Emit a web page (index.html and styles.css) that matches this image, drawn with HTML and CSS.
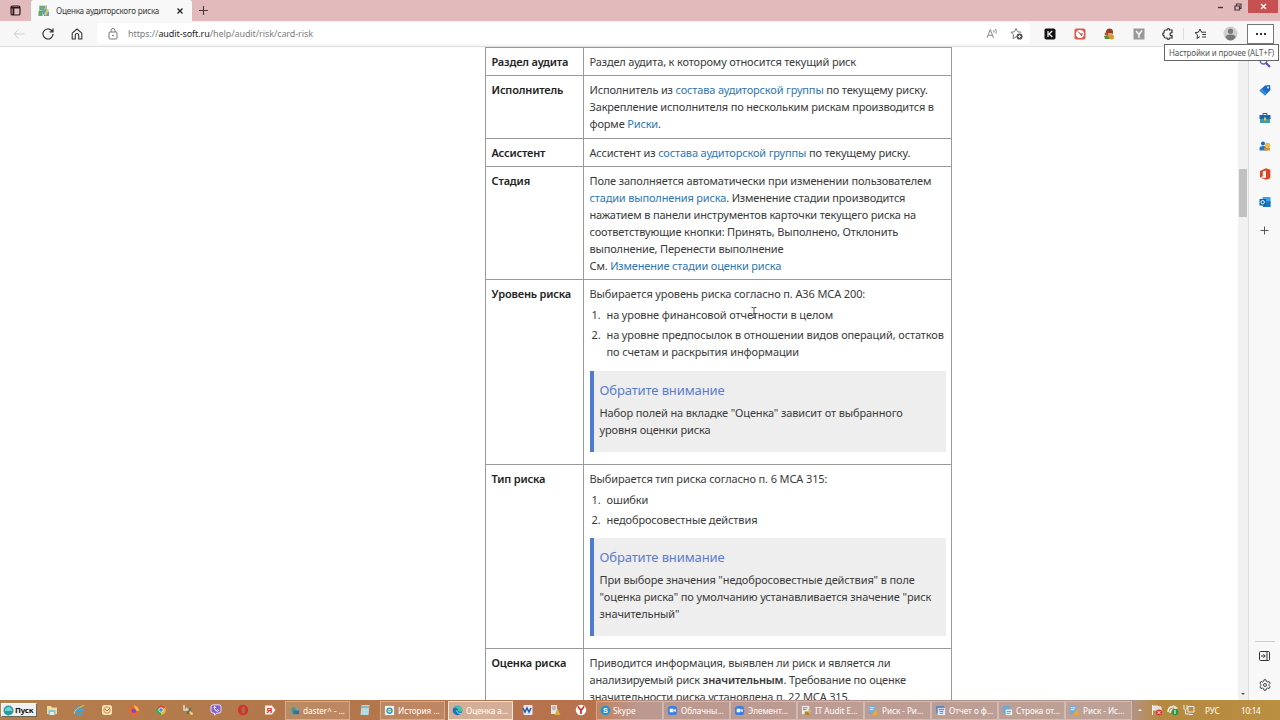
FILE: index.html
```
<!DOCTYPE html>
<html lang="ru">
<head>
    <meta charset="UTF-8">
    <title>Оценка аудиторского риска</title>
    <link rel="stylesheet" href="styles.css">
</head>
<body>
    <!-- Tabs -->
    <div class="tabbar">
        <div class="tab-menu">
            <svg width="11" height="11" viewBox="0 0 11 11"><rect x="1" y="1" width="9" height="9" rx="1.6" fill="none" stroke="#2b1a1c" stroke-width="1.2"/><path d="M1 2.6h9M3.4 3v7" stroke="#2b1a1c" stroke-width="1.8"/></svg>
        </div>
        <div class="tab">
            <svg width="12" height="12" viewBox="0 0 12 12"><rect x="1" y="0.5" width="8" height="8" fill="#9fc3a3"/><path d="M2 2h5M2 4h4" stroke="#3f8f55"/><rect x="0.5" y="6" width="4" height="5" fill="#58a869"/><path d="M4 6l4-2 3 3v4H6z" fill="#5a9bd0"/><path d="M6 9l3-5 2 1-3 6z" fill="#e0c45c"/></svg>
            <span class="tab-title">Оценка аудиторского риска</span>
            <svg class="tab-close" width="8" height="8" viewBox="0 0 8 8"><path d="M1.5 1.5l5 5M6.500 1.500l-5 5" stroke="#222" stroke-width="1.3"/></svg>
        </div>
        <svg class="new-tab" width="11" height="11" viewBox="0 0 11 11"><path d="M5.500 1v9M1 5.500h9" stroke="#4a3538" stroke-width="1.1"/></svg>
        <div class="window-buttons">
            <svg width="7" height="7" viewBox="0 0 7 7"><path d="M1 4.500h5" stroke="#4b3437" stroke-width="1.4"/></svg>
            <svg width="8" height="8" viewBox="0 0 8 8"><path d="M2.500 2.500V1h4.500v4.500H5.500M1 3h4.500v4H1z" fill="none" stroke="#4b3437" stroke-width="1.2"/></svg>
            <div class="window-close"><svg width="7" height="7" viewBox="0 0 7 7"><path d="M1 1l5 5M6 1L1 6" stroke="#fff" stroke-width="1.400"/></svg></div>
        </div>
    </div>

    <!-- Toolbar -->
    <div class="toolbar">
        <div class="nav">
            <svg width="12" height="12" viewBox="0 0 12 12" fill="none" stroke="#cfcfcf"><path d="M11.500 6H1M5.500 1.500L1 6l4.500 4.500"/></svg>
            <svg width="12" height="12" viewBox="0 0 12 12" fill="none" stroke="#333" stroke-width="1.2"><path d="M11 6a5 5 0 1 1-1.600-3.700L11 3.800M11 .5v3.300H7.700"/></svg>
            <svg width="12" height="12" viewBox="0 0 12 12" fill="none" stroke="#333" stroke-width="1.100"><path d="M1.200 5.200L6 1l4.800 4.200V11H7.700V7.200a1.700 1.700 0 0 0-3.400 0V11H1.200z" stroke-linejoin="round"/></svg>
        </div>
        <div class="address">
            <svg width="10" height="12" viewBox="0 0 10 12" fill="none" stroke="#777"><rect x="1" y="4" width="8" height="7" rx="1"/><path d="M3 4V2.500a2 2 0 0 1 4 0V4"/><circle cx="5" cy="7.500" r=".5" fill="#777"/></svg>
            <span class="url">https://<b>audit-soft.ru</b>/help/audit/risk/card-risk</span>
            <svg class="read" width="12" height="12" viewBox="0 0 12 12" fill="none" stroke="#888"><path d="M1 10l3.300-8.500L7.500 10M2.300 7.300h4M7.500 2q1 1 .5 2.500M9.300 1q1.600 2 .7 4.500"/></svg>
            <svg width="13" height="13" viewBox="0 0 13 13" fill="none" stroke="#777"><path d="M6 10L3 11.500l.5-3.700L1 5.300l3.500-.6L6 1.500l1.600 3.200 3.700.6"/><circle cx="9.500" cy="9.500" r="3.100" fill="#555" stroke="none"/><path d="M9.500 8v3M8 9.500h3" stroke="#fff" stroke-width=".8"/></svg>
        </div>
        <div class="extensions">
            <svg width="12" height="12" viewBox="0 0 12 12"><rect x=".5" y=".5" width="11" height="11" rx="1.800" fill="#111"/><path d="M4 3v6M8.200 3L5 6l3.400 3" stroke="#fff" stroke-width="1.200" fill="none"/></svg>
            <svg width="12" height="12" viewBox="0 0 12 12"><rect x=".5" y=".5" width="11" height="11" rx="2" fill="#e2574c"/><circle cx="6" cy="6" r="4" fill="#fff"/><path d="M4 3.500L6.500 6H9M6.500 6L8 8" stroke="#a33" fill="none"/></svg>
            <svg width="12" height="12" viewBox="0 0 12 12"><circle cx="6.500" cy="4" r="3.500" fill="#9c3b24"/><path d="M5 5h4v3H5z" fill="#e0a35e"/><path d="M1 8l4-1 2 4H2z" fill="#5b8a3c"/><circle cx="8.500" cy="9" r="2.500" fill="#d99a2b"/><circle cx="3" cy="6" r="1.400" fill="#b55a33"/></svg>
            <svg width="12" height="12" viewBox="0 0 12 12"><rect x=".5" y=".5" width="11" height="11" fill="#999"/><path d="M3 3l3 3.500V10M9 2.500L6 6.500" stroke="#fff" stroke-width="1.300" fill="none"/></svg>
            <svg width="12" height="12" viewBox="0 0 12 12" fill="none" stroke="#333" stroke-width="1.200"><path d="M2 3.500Q2 2 3.500 2H5q0-1.300 1.300-1.300T7.500 2H10v2.700Q8 4.500 8 6.200T10 7.700V10H7.500q0 1.300-1.200 1.300T5 10H3.500Q2 10 2 8.500V7.700Q.7 7.500.7 6.200T2 4.800z"/></svg>
        </div>
        <div class="toolbar-end">
            <svg width="13" height="12" viewBox="0 0 13 12" fill="none" stroke="#333"><path d="M6 8.500L3 10.500l.6-3.500L1 4.700l3.400-.5L6 1l1.500 3.200H12M8.300 6.500H12M8 9h4"/></svg>
            <svg width="15" height="15" viewBox="0 0 15 15"><circle cx="7.500" cy="7.500" r="7" fill="#cfcfcf"/><circle cx="7.500" cy="5.200" r="2.600" fill="#777"/><path d="M2.500 11.500q0-3 5-3t5 3q-2 3-5 3t-5-3z" fill="#777"/></svg>
            <div class="more"><i></i><i></i><i></i></div>
        </div>
        <div class="tooltip">Настройки и прочее (ALT+F)</div>
    </div>

    <!-- Page and sidebar -->
    <div class="main">
        <div class="page">
            <table class="fields">
                <tr class="row-section">
                    <th>Раздел аудита</th>
                    <td>Раздел аудита, к которому относится текущий риск</td>
                </tr>
                <tr class="row-executor">
                    <th>Исполнитель</th>
                    <td>Исполнитель из <a>состава аудиторской группы</a> по текущему риску.<br>Закрепление исполнителя по нескольким рискам производится в<br>форме <a>Риски</a>.</td>
                </tr>
                <tr class="row-section">
                    <th>Ассистент</th>
                    <td>Ассистент из <a>состава аудиторской группы</a> по текущему риску.</td>
                </tr>
                <tr class="row-stage">
                    <th>Стадия</th>
                    <td>Поле заполняется автоматически при изменении пользователем<br><a>стадии выполнения риска</a>. Изменение стадии производится<br>нажатием в панели инструментов карточки текущего риска на<br>соответствующие кнопки: Принять, Выполнено, Отклонить<br>выполнение, Перенести выполнение<br>См. <a>Изменение стадии оценки риска</a></td>
                </tr>
                <tr class="row-level">
                    <th>Уровень риска</th>
                    <td>
                        Выбирается уровень риска согласно п. А36 МСА 200:
                        <ol>
                            <li><span>1.</span><p>на уровне финансовой отчетности в целом</p></li>
                            <li><span>2.</span><p>на уровне предпосылок в отношении видов операций, остатков<br>по счетам и раскрытия информации</p></li>
                        </ol>
                        <div class="note">
                            <h4>Обратите внимание</h4>
                            <p>Набор полей на вкладке "Оценка" зависит от выбранного<br>уровня оценки риска</p>
                        </div>
                    </td>
                </tr>
                <tr class="row-level">
                    <th>Тип риска</th>
                    <td>
                        Выбирается тип риска согласно п. 6 МСА 315:
                        <ol>
                            <li><span>1.</span><p>ошибки</p></li>
                            <li><span>2.</span><p>недобросовестные действия</p></li>
                        </ol>
                        <div class="note">
                            <h4>Обратите внимание</h4>
                            <p>При выборе значения "недобросовестные действия" в поле<br>"оценка риска" по умолчанию устанавливается значение "риск<br>значительный"</p>
                        </div>
                    </td>
                </tr>
                <tr>
                    <th>Оценка риска</th>
                    <td>Приводится информация, выявлен ли риск и является ли<br>анализируемый риск <b>значительным</b>. Требование по оценке<br>значительности риска установлена п. 22 МСА 315.</td>
                </tr>
            </table>
            <svg class="cursor" width="6" height="11" viewBox="0 0 6 11"><path d="M.5.500h2l.5.500.500-.5h2M3 1v9M1 10.500h4" stroke="#555" fill="none"/></svg>
        </div>
        <div class="scrollbar"><div class="thumb"></div><div class="arrow"></div></div>
        <div class="sidebar">
            <svg width="12" height="12" viewBox="0 0 12 12" fill="none"><circle cx="4.500" cy="4.500" r="3.400" stroke="#4a6ad0" stroke-width="1.500"/><path d="M7 7l4 4" stroke="#6046c0" stroke-width="2"/></svg>
            <svg width="12" height="12" viewBox="0 0 12 12"><path d="M6 1.500L11 1l.5 5-5.500 5.500L.5 6.500z" fill="#1d68c0"/><path d="M.5 6.500L6 11.500l2-2-5-5z" fill="#2d8fe0"/><circle cx="9" cy="3.500" r=".9" fill="#fff"/></svg>
            <svg width="12" height="12" viewBox="0 0 12 12"><path d="M4 3V1.500h4V3" stroke="#1b5a9c" fill="none"/><rect x=".5" y="3" width="11" height="4" fill="#1c66ac"/><rect x="1" y="7" width="10" height="4" fill="#3ba09a"/><rect x="5" y="5.500" width="2" height="3" fill="#f2c14a"/></svg>
            <svg width="12" height="12" viewBox="0 0 12 12"><circle cx="4" cy="3.500" r="2" fill="#1d65b5"/><path d="M.5 10.500V8q0-2 3.500-2t4 2v2.500z" fill="#2872c8"/><circle cx="8.500" cy="5.500" r="2.800" fill="#e7b94f"/><path d="M5 8h6v2.500H5z" fill="#cf9430"/></svg>
            <svg width="12" height="12" viewBox="0 0 12 12"><path d="M1 3L7 .3l4.300 1.400v8.600L7 11.700 1 9.500l6 .6V2.600L3.800 3.500v4.700L1 9.500z" fill="#dc4322"/></svg>
            <svg width="12" height="12" viewBox="0 0 12 12"><path d="M3.500 1h8v9h-8z" fill="#3aa5e8"/><path d="M4 6l7.500-1v6H4z" fill="#1775c4"/><rect x=".5" y="3" width="6.500" height="6.500" fill="#0f63ad"/><circle cx="3.700" cy="6.200" r="1.700" fill="none" stroke="#fff"/></svg>
            <svg class="add" width="9" height="9" viewBox="0 0 9 9"><path d="M4.500.5v8M.5 4.500h8" stroke="#555"/></svg>
            <hr>
            <svg class="panel-icon" width="11" height="10" viewBox="0 0 11 10" fill="none" stroke="#333"><rect x=".5" y=".5" width="10" height="9" rx="1"/><path d="M8 .5v9M2 5h4M4.500 3.200L6.300 5 4.500 6.800"/></svg>
            <svg class="gear" width="12" height="12" viewBox="0 0 12 12" fill="none" stroke="#444"><path d="M5 .8h2l.4 1.600 1.100.6 1.600-.5 1 1.800-1.100 1.100v1.200l1.100 1.100-1 1.800-1.600-.5-1.100.6L7 11.200H5l-.4-1.600L3.500 9l-1.600.5-1-1.800L2 6.600V5.400L.9 4.300l1-1.800 1.600.5 1.100-.6z"/><circle cx="6" cy="6" r="1.500"/></svg>
        </div>
    </div>

    <!-- Taskbar -->
    <div class="taskbar">
        <div class="start"><svg width="11" height="11" viewBox="0 0 11 11"><circle cx="5.500" cy="5.500" r="5" fill="#2b9aa3"/><path d="M1.500 6q1-4 4-4t4 4z" fill="#6fd0d0"/></svg>Пуск</div>
        <div class="quick quick-main">
            <svg viewBox="0 0 12 12"><path d="M1 2h4l1 1.500h5V10H1z" fill="#f0dc98"/><path d="M2.500 6h7v5h-7z" fill="#86c5dc"/><path d="M4 8h4v3H4z" fill="#f4ead0"/></svg>
            <svg viewBox="0 0 12 12"><path d="M9.500 8.500A3.800 3.800 0 1 1 9.800 6.300H3" fill="none" stroke="#3fa5dc" stroke-width="1.900"/><path d="M1 10Q1 5 11 1.500" stroke="#e8c24c" fill="none"/></svg>
            <svg viewBox="0 0 12 12"><rect x="1" y="1" width="10" height="10" rx="2.500" fill="#f5e3bd"/><circle cx="6" cy="6" r="3.200" fill="none" stroke="#d98b3b"/><path d="M4 5l2 2 3-3" stroke="#c26c28" fill="none"/></svg>
            <svg viewBox="0 0 12 12"><circle cx="6" cy="6.500" r="5" fill="#f0642e"/><path d="M6 1q5 2 5 6l-4-1z" fill="#ffc13c"/><circle cx="5.800" cy="6.800" r="2.300" fill="#7a4cc0"/></svg>
            <svg viewBox="0 0 12 12"><circle cx="6" cy="6" r="5" fill="#e4b82c"/><path d="M6 6L1.700 3.500a5 5 0 0 1 8.600 0z" fill="#dd4b3c"/><path d="M6 6L1.700 3.500A5 5 0 0 0 6 11z" fill="#3fa554"/><circle cx="6" cy="6" r="2.200" fill="#4384e8" stroke="#fff" stroke-width=".8"/></svg>
            <svg viewBox="0 0 12 12"><path d="M2 1v5h3M4 4l6 6" stroke="#d9e6c0" fill="none" stroke-width="1.500"/><path d="M9 4L5 10" stroke="#586a70" stroke-width="1.500"/><circle cx="9.500" cy="9.500" r="1.500" fill="#e5d04a"/></svg>
            <svg viewBox="0 0 12 12"><path d="M3 .8h6q2 0 2 2v4q0 2.200-2 2.200H7l-2.500 2.200V9H3Q1 9 1 7V3Q1 .8 3 .8z" fill="#8460d8" stroke="#e7defa"/><path d="M4 3q0 3 3.500 4.500l1-1-1.300-1M4 3l1-.5.7 1.300" stroke="#fff" fill="none"/></svg>
            <svg viewBox="0 0 12 12"><circle cx="6" cy="6" r="5.200" fill="#d3322d"/><ellipse cx="6.300" cy="6" rx="2" ry="3.500" fill="#a96a4a"/></svg>
            <svg viewBox="0 0 12 12"><path d="M1 1.500h7l3.500 4.500L8 10.500H1z" fill="#f6eee8"/><text x="2.500" y="9.200" class="ya">Я</text></svg>
        </div>
        <div class="task first"><svg viewBox="0 0 12 12"><circle cx="6" cy="6" r="4.500" fill="#6ba5c8"/><path d="M2 4l4-2 2 4-4 4z" fill="#5b965c"/><rect x="5" y="6" width="6" height="4" fill="#356da2"/></svg>daster^ - ...</div>
        <div class="quick quick-note"><svg viewBox="0 0 12 12"><path d="M2.500 1h8L9.500 11h-8z" fill="#b4dbe0"/><path d="M2.500 3h8" stroke="#5f96a5"/></svg></div>
        <div class="task"><svg viewBox="0 0 12 12"><rect x="1" y="1" width="10" height="10" fill="#f2f2e8"/><circle cx="6" cy="6.300" r="2.700" fill="none" stroke="#3099cf" stroke-width="1.500"/><path d="M3 6.300h6" stroke="#75aa44"/></svg>История ...</div>
        <div class="task active"><svg viewBox="0 0 12 12"><circle cx="6" cy="6" r="5.200" fill="#1578bd"/><path d="M2 3Q5-.5 9 2t1.500 5Q8 8 7 6.500T6 4 2 3z" fill="#42c8a0"/><path d="M5 6q1 4 5 3" stroke="#bfe6ee" fill="none"/></svg>Оценка а...</div>
        <div class="quick quick-mid">
            <svg viewBox="0 0 12 12"><rect x="1.500" y="1" width="9" height="10" rx="1" fill="#e3e8f6"/><path d="M1 4l2 4 2-4 2 4 2-4" stroke="#3157a6" stroke-width="1.500" fill="none"/></svg>
            <svg viewBox="0 0 12 12"><path d="M2 1h6v9H2z" fill="#e9e4e4"/><path d="M3 3h4M3 5h4" stroke="#8c8c9c"/><path d="M8.500 4.500l3 6.500h-6z" fill="#d8b23e"/></svg>
            <svg viewBox="0 0 12 12"><circle cx="6" cy="6" r="5.200" fill="#fff"/><path d="M3 2.500l3 4V10M9 2.500l-3 4" stroke="#d42c28" stroke-width="1.700" fill="none"/></svg>
        </div>
        <div class="task wide skype"><svg viewBox="0 0 12 12"><circle cx="6" cy="6" r="5.200" fill="#1598d2"/><text x="3.400" y="8.800" class="sk">S</text></svg>Skype</div>
        <div class="task wide"><svg viewBox="0 0 12 12"><rect x="1" y="1" width="10" height="10" rx="3.500" fill="#3a7fe4"/><path d="M3 4h4v4H3zM7.500 5.500L9.500 4v4l-2-1.500z" fill="#fff"/></svg>Облачны...</div>
        <div class="task wide"><svg viewBox="0 0 12 12"><rect x="1" y="1" width="10" height="10" rx="3.500" fill="#3a7fe4"/><path d="M3 4h4v4H3zM7.500 5.500L9.500 4v4l-2-1.500z" fill="#fff"/></svg>Элемент...</div>
        <div class="task wide"><svg viewBox="0 0 12 12"><path d="M1 1h8v9H1z" fill="#eee"/><path d="M2 3h5M2 5h4" stroke="#777"/><path d="M4 11V7h5v4z" fill="#b0872e"/><path d="M8 4l3 3-3 2z" fill="#e8b83c"/></svg>IT Audit E...</div>
        <div class="task wide"><svg viewBox="0 0 12 12"><path d="M1 1h7v9H1z" fill="#78aad8"/><path d="M2 3h5M2 5h4" stroke="#e5f2ff"/><path d="M8 4.500l3.500 6.500h-7z" fill="#e9a836"/></svg>Риск - Ри...</div>
        <div class="task wide"><svg viewBox="0 0 12 12"><path d="M1 1h9v8H1z" fill="#6688bd"/><path d="M3 3.500h8V11H3z" fill="#e8effb"/><path d="M4 5h6M5 7h4M5 9h4" stroke="#5575ac"/></svg>Отчет о ф...</div>
        <div class="task wide"><svg viewBox="0 0 12 12"><path d="M1 1h8v9H1z" fill="#74a9d5"/><path d="M4 5h7v6H4z" fill="#edf5f8"/><path d="M5 7h5M5 9h4" stroke="#50a19c"/></svg>Строка от...</div>
        <div class="task wide"><svg viewBox="0 0 12 12"><path d="M1 1h7v9H1z" fill="#78aad8"/><path d="M2 3h5M2 5h4" stroke="#e5f2ff"/><path d="M8 4.500l3.500 6.500h-7z" fill="#e9a836"/></svg>Риск - Ис...</div>
        <div class="tray">
            <span class="tray-up"></span>
            <svg viewBox="0 0 12 12"><path d="M1.500 1v10M2 2h5l1 1h2v4H7L6 6H2z" fill="#ddd" stroke="#eee"/><circle cx="8" cy="8.500" r="3" fill="#d83a35"/><path d="M6.800 7.300l2.400 2.400M9.200 7.300L6.800 9.700" stroke="#fff"/></svg>
            <svg viewBox="0 0 12 12"><path d="M1 8q0-5 5-5.500M3 9q0-3 3-4" stroke="#eee" stroke-width="1.500" fill="none"/><path d="M6 1l5 3-4 2z" fill="#eee"/><circle cx="8" cy="8" r="3.300" fill="#299642"/><path d="M8 6v4" stroke="#fff"/></svg>
            <svg viewBox="0 0 12 12" fill="none" stroke="#eee"><path d="M1 1v4q0 1 1.500 1T4 5V1M2.500 6v4H6M5 2.500h6v5.500H5zM6 10.500h4"/></svg>
        </div>
        <span class="lang">РУС</span>
        <span class="clock">10:14</span>
    </div>
</body>
</html>
```
FILE: styles.css
```
* {
    box-sizing: border-box;
}

body {
    margin: 0;
    width: 1280px;
    height: 720px;
    overflow: hidden;
    display: flex;
    flex-direction: column;
    font-family: "Noto Sans", "Open Sans", sans-serif;
    font-size: 11px;
    color: #3a3a3a;
    background: #fff;
}

svg {
    display: block;
    flex-shrink: 0;
}

/* Tabs */
.tabbar {
    display: flex;
    align-items: center;
    height: 21px;
    background: #e2babc;
}

.tab-menu {
    width: 31px;
    padding-left: 10px;
}

.tab {
    display: flex;
    align-items: center;
    width: 161px;
    height: 21px;
    padding: 0 8px 0 7px;
    background: #f8f8f8;
    border-radius: 3px 3px 0 0;
}

.tab-title {
    margin-left: 6px;
    font-size: 8.1px;
    letter-spacing: -0.22px;
    white-space: nowrap;
}

.tab-close {
    margin-left: auto;
}

.new-tab {
    margin-left: 6px;
}

.window-buttons {
    display: flex;
    gap: 10px;
    height: 13px;
    margin: 0 2px auto auto;
    align-items: center;
}

.window-close {
    display: flex;
    align-items: center;
    justify-content: center;
    width: 30px;
    height: 13px;
    margin-left: -4px;
    background: #c75050;
}

/* Toolbar */
.toolbar {
    position: relative;
    z-index: 2;
    display: flex;
    align-items: center;
    height: 26px;
    background: #f7f7f7;
    border-bottom: 1px solid #dedede;
}

.nav {
    display: flex;
    gap: 17px;
    width: 97px;
    padding-left: 13px;
}

.address {
    display: flex;
    align-items: center;
    width: 933px;
    height: 21px;
    padding: 0 7px 0 11px;
    background: #fff;
    border-radius: 3px;
}

.url {
    margin-left: 10px;
    font-size: 9px;
    letter-spacing: -0.08px;
    color: #808080;
}

.url b {
    font-weight: normal;
    color: #222;
}

.read {
    margin: 0 12px 0 auto;
}

.extensions {
    display: flex;
    gap: 17.5px;
    width: 153px;
    padding-left: 14px;
}

.toolbar-end {
    display: flex;
    align-items: center;
    height: 12px;
    padding-left: 10px;
    border-left: 1px solid #ddd;
}

.toolbar-end svg + svg {
    margin-left: 16px;
}

.more {
    display: flex;
    align-items: center;
    justify-content: center;
    gap: 2px;
    width: 27px;
    height: 20px;
    margin-left: 9px;
    border: 1px solid #777;
    background: #fff;
}

.more i {
    width: 2px;
    height: 2px;
    background: #333;
}

.tooltip {
    position: absolute;
    top: 23px;
    right: 1px;
    width: 115px;
    height: 17px;
    border: 1px solid #666;
    background: #fff;
    font-size: 8px;
    letter-spacing: -0.12px;
    line-height: 15px;
    text-align: center;
    white-space: nowrap;
    color: #555;
}

/* Page */
.main {
    display: flex;
    height: 653px;
}

.page {
    position: relative;
    width: 1238px;
    height: 653px;
    overflow: hidden;
}

.fields {
    width: 467px;
    margin: 0 0 0 485px;
    border-collapse: collapse;
    table-layout: fixed;
    line-height: 17px;
    letter-spacing: -0.16px;
}

.fields th,
.fields td {
    padding: 5px 5px 5px 5.5px;
    border: 1px solid #999;
    vertical-align: top;
    text-align: left;
    white-space: nowrap;
}

.fields th {
    width: 98px;
    font-weight: 600;
    color: #222;
}

.fields b {
    font-weight: 600;
}

.fields a {
    color: #2f76b2;
}

.row-section {
    height: 28px;
}

.row-executor {
    height: 63px;
}

.row-stage {
    height: 113px;
}

.row-level {
    height: 184.5px;
}

.row-level td {
    letter-spacing: -0.12px;
}

ol {
    list-style: none;
    margin: 4px 0 10.5px;
    padding: 0;
}

li {
    display: flex;
    margin-bottom: 3px;
}

li span {
    flex-shrink: 0;
    width: 17px;
    padding-left: 2px;
}

li p,
.note p {
    margin: 0;
}

.note {
    padding: 10px 6px 14px;
    border-left: 4px solid #5079d2;
    background: #eee;
}

.note h4 {
    margin: 0 0 4px;
    font-size: 13px;
    font-weight: normal;
    line-height: 19px;
    color: #5b7cd0;
}

.cursor {
    position: absolute;
    left: 751px;
    top: 260px;
}

.scrollbar {
    position: relative;
    width: 11px;
    background: #f1f1f1;
    border-right: 1px solid #ddd;
}

.thumb {
    width: 8px;
    height: 48px;
    margin: 122px 0 0 1px;
    background: #c1c1c1;
}

.arrow {
    position: absolute;
    left: 3px;
    bottom: 5px;
    border: 2.5px solid transparent;
    border-top-color: #555;
    border-bottom: 0;
}

.sidebar {
    display: flex;
    flex-direction: column;
    align-items: center;
    gap: 16px;
    width: 31px;
    padding-top: 9px;
    background: #f8f8f8;
}

.add {
    margin-top: 2px;
}

.sidebar hr {
    width: 20px;
    margin: auto 0 -7px;
    border: 0;
    border-top: 1px solid #ccc;
}

.panel-icon {
    margin-bottom: 2px;
}

.gear {
    margin-bottom: 9px;
}

/* Taskbar */
.taskbar {
    display: flex;
    align-items: center;
    height: 20px;
    background: linear-gradient(90deg, #b57e4e 0, #b2784b 280px, #b8714d 600px, #b18a80 640px, #b49388 1130px, #b5893f 1160px, #b98f42 1280px);
    color: #fff;
    font-size: 8.2px;
    white-space: nowrap;
}

.start {
    display: flex;
    align-items: center;
    gap: 1px;
    width: 36px;
    height: 14px;
    margin-left: 1px;
    padding-left: 1px;
    background: #efefef;
    border: 1px solid #fff;
    border-right-color: #665;
    border-bottom-color: #665;
    color: #111;
    font-size: 7.8px;
    font-weight: bold;
    letter-spacing: -0.15px;
}

.quick {
    display: flex;
    gap: 15.3px;
}

.quick svg,
.tray svg {
    width: 12px;
    height: 12px;
}

.quick-main {
    width: 248px;
    padding-left: 9px;
}

.quick-note {
    width: 30px;
    padding-left: 9px;
}

.quick-mid {
    gap: 14.5px;
    width: 83px;
    padding-left: 9px;
}

.ya {
    font: bold 8px "Liberation Sans", sans-serif;
    fill: #d02a26;
}

.sk {
    font: bold 8px "Liberation Sans", sans-serif;
    fill: #fff;
}

.task {
    display: flex;
    align-items: center;
    gap: 3px;
    width: 65px;
    height: 19px;
    padding-left: 3px;
    border: 1px solid rgba(255, 255, 255, 0.3);
    background: rgba(255, 255, 255, 0.13);
    letter-spacing: -0.05px;
}

.task svg {
    width: 11px;
    height: 11px;
}

.task.active {
    margin-left: 3px;
    background: rgba(255, 255, 255, 0.42);
    border-color: rgba(255, 255, 255, 0.7);
}

.task.wide {
    width: 67px;
}

.task.skype {
    gap: 2px;
}

.tray {
    display: flex;
    align-items: center;
    gap: 4px;
    width: 73px;
    padding-left: 6px;
}

.tray-up {
    margin-right: 5px;
    border: 2.5px solid transparent;
    border-bottom-color: #fff;
    border-top: 0;
}

.lang {
    width: 36px;
}

.clock {
    font-size: 8.2px;
    letter-spacing: -0.3px;
}
```
